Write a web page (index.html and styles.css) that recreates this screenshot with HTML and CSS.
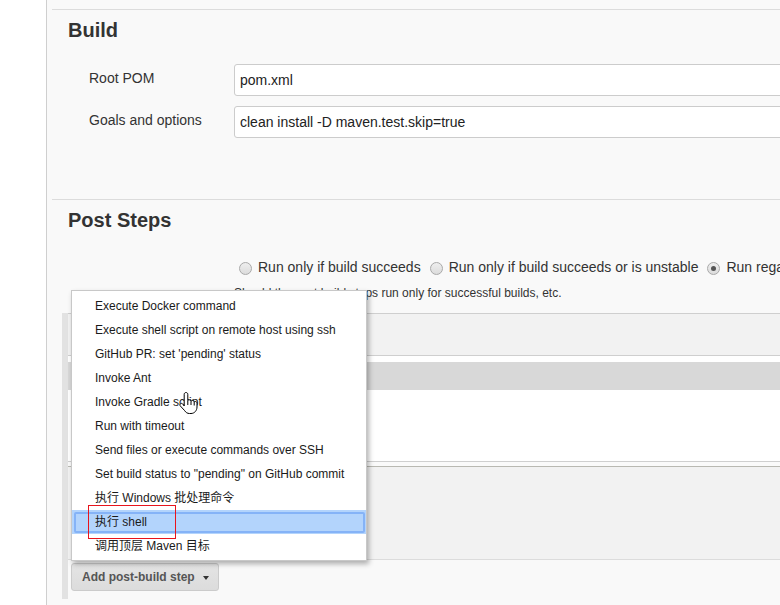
FILE: index.html
```html
<!DOCTYPE html>
<html>
<head>
<meta charset="utf-8">
<link rel="stylesheet" href="styles.css">
</head>
<body>
<div class="side"></div>
<div class="main">
  <div class="section build">
    <h2 class="title">Build</h2>
    <div class="rows">
      <div class="row"><div class="label">Root POM</div><div class="input">pom.xml</div></div>
      <div class="row"><div class="label">Goals and options</div><div class="input">clean install -D maven.test.skip=true</div></div>
    </div>
  </div>
  <div class="section post">
    <h2 class="title">Post Steps</h2>
    <div class="radios">
      <span class="radio"></span><span class="rlabel">Run only if build succeeds</span>
      <span class="radio"></span><span class="rlabel">Run only if build succeeds or is unstable</span>
      <span class="radio checked"></span><span class="rlabel">Run regardless of build result</span>
    </div>
    <div class="help">Should the post build steps run only for successful builds, etc.</div>
    <div class="container">
      <div class="hdr"></div>
      <div class="gap"></div>
      <div class="band"></div>
      <div class="blank"></div>
      <div class="sep"><span class="grip"></span></div>
      <div class="lower"></div>
      <div class="foot"><button class="addbtn">Add post-build step<span class="caret"></span></button></div>
    </div>
  </div>

  <div class="menu">
    <div class="item">Execute Docker command</div>
    <div class="item">Execute shell script on remote host using ssh</div>
    <div class="item">GitHub PR: set 'pending' status</div>
    <div class="item">Invoke Ant</div>
    <div class="item">Invoke Gradle script</div>
    <div class="item">Run with timeout</div>
    <div class="item">Send files or execute commands over SSH</div>
    <div class="item">Set build status to "pending" on GitHub commit</div>
    <div class="item">执行 Windows 批处理命令</div>
    <div class="item selected">执行 shell</div>
    <div class="item">调用顶层 Maven 目标</div>
    <div class="redbox"></div>
  </div>

  <svg class="cursor" width="20" height="24" viewBox="0 0 20 24">
    <path d="M8,1.5 C9,1.5 9.8,2.3 9.8,3.3 V9.6 C10.1,9.1 10.7,8.8 11.3,8.8 C12.2,8.8 12.9,9.4 13,10.2 C13.3,9.8 13.9,9.5 14.5,9.5 C15.4,9.5 16.1,10.2 16.2,11 C16.5,10.7 16.9,10.5 17.4,10.5 C18.4,10.5 19,11.3 19,12.2 V16 C19,19.5 16.5,22.5 13,22.5 H11.5 C9.3,22.5 7.9,21.5 6.7,19.7 L2.2,14.8 C1.7,14 1.9,13 2.7,12.6 C3.4,12.2 4.3,12.4 4.8,13.1 L6.2,15 V3.3 C6.2,2.3 7,1.5 8,1.5 Z" fill="#fff" stroke="#000" stroke-width="1" stroke-linejoin="round"/>
    <path d="M9.8,9.6 V14 M13,10.2 V14 M16.2,11 V14.5" fill="none" stroke="#000" stroke-width="1"/>
  </svg>
</div>
</body>
</html>
```

FILE: styles.css
```css
* { box-sizing: border-box; }
html, body { margin: 0; padding: 0; }
body {
  display: flex;
  width: 780px;
  height: 605px;
  overflow: hidden;
  background: #fff;
  font-family: "Liberation Sans", Arial, sans-serif;
  color: #333;
}
.side {
  width: 47px;
  flex: none;
  border-right: 1px solid #cfcfcf;
  background: #fff;
}
.main {
  position: relative;
  flex: 1;
  min-width: 0;
  background: #f9f9f9;
  padding-top: 9px;
  padding-left: 5px;
  overflow: hidden;
}
.section {
  border-top: 1px solid #dcdcdc;
  margin-right: -40px;
}
.title {
  margin: 0;
  padding: 8px 0 0 16px;
  font-size: 20px;
  line-height: 24px;
  font-weight: bold;
  color: #333;
}
.build { padding-bottom: 61px; }
.rows {
  margin-top: 22px;
  display: flex;
  flex-direction: column;
  gap: 10px;
  padding-left: 37px;
}
.row {
  display: flex;
  height: 32px;
}
.label {
  width: 145px;
  flex: none;
  font-size: 14px;
  line-height: 16px;
  padding-top: 6px;
}
.input {
  flex: 1;
  height: 32px;
  background: #fff;
  border: 1px solid #ccc;
  border-radius: 3px;
  font-size: 14px;
  line-height: 30px;
  padding-left: 5px;
  color: #222;
}
.radios {
  margin-top: 25px;
  height: 20px;
  padding-left: 187px;
  display: flex;
  align-items: center;
  white-space: nowrap;
  font-size: 14px;
}
.radio {
  width: 13px;
  height: 13px;
  flex: none;
  border-radius: 50%;
  border: 1px solid #a9a9a9;
  background: linear-gradient(#eee, #dcdcdc);
  margin-top: 2px;
  margin-right: 6px;
  position: relative;
}
.radio.checked::after {
  content: "";
  position: absolute;
  left: 3px;
  top: 3px;
  width: 5px;
  height: 5px;
  border-radius: 50%;
  background: #555;
}
.rlabel { margin-right: 9px; color: #333; }
.help {
  margin-top: 8px;
  padding-left: 182px;
  font-size: 12px;
  line-height: 16px;
  color: #333;
}
.container {
  margin-top: 12px;
  margin-left: 10px;
  border-left: 6px solid #e2e2e2;
}
.hdr {
  height: 43px;
  background: #f2f2f2;
  border-top: 1px solid #cfcfcf;
  border-bottom: 1px solid #cfcfcf;
}
.gap { height: 6px; background: #fff; }
.band { height: 28px; background: #d8d8d8; }
.blank { height: 71px; background: #fff; }
.sep {
  height: 6px;
  background: #fafafa;
  border-top: 1px solid #cfcfcf;
  border-bottom: 1px solid #b9b9b2;
  display: flex;
  justify-content: flex-end;
  padding-right: 28px;
}
.grip {
  width: 12px;
  height: 4px;
  margin-top: 1px;
  border-top: 1px solid #888;
  border-bottom: 1px solid #888;
}
.lower {
  height: 93px;
  background: #f2f2f2;
  border-bottom: 1px solid #dcdcdc;
}
.foot {
  padding: 3px 0 8px 3px;
}
.addbtn {
  display: flex;
  align-items: center;
  height: 28px;
  width: 148px;
  padding: 0 0 0 10px;
  border: 1px solid #cbcbcb;
  border-radius: 3px;
  background: linear-gradient(#e4e4e4, #dcdcdc);
  font-family: "Liberation Sans", Arial, sans-serif;
  font-size: 12px;
  font-weight: bold;
  color: #555;
}
.caret {
  margin-left: 8px;
  margin-top: 2px;
  width: 0;
  height: 0;
  border-left: 3.5px solid transparent;
  border-right: 3.5px solid transparent;
  border-top: 4px solid #333;
}
.menu {
  position: absolute;
  left: 24px;
  top: 290px;
  width: 296px;
  height: 271px;
  background: #fff;
  border: 1px solid #c8c8c8;
  box-shadow: 2px 3px 5px rgba(0, 0, 0, 0.3);
  padding: 3px 0 2px;
  font-size: 12px;
  color: #1a1a1a;
  font-family: "Liberation Sans", Arial, "Noto Sans CJK SC", sans-serif;
}
.item {
  height: 24px;
  line-height: 24px;
  padding-left: 23px;
  white-space: nowrap;
  position: relative;
}
.item.selected {
  background: #b3d4fc;
}
.item.selected::after {
  content: "";
  position: absolute;
  left: 2px;
  right: 1px;
  top: 2px;
  bottom: 1px;
  border: 2px solid #85b3f7;
  border-radius: 2px;
}
.redbox {
  position: absolute;
  left: 16px;
  top: 214px;
  width: 88px;
  height: 34px;
  border: 1px solid #e8141c;
}
.cursor {
  position: absolute;
  left: 131px;
  top: 391px;
}
```
